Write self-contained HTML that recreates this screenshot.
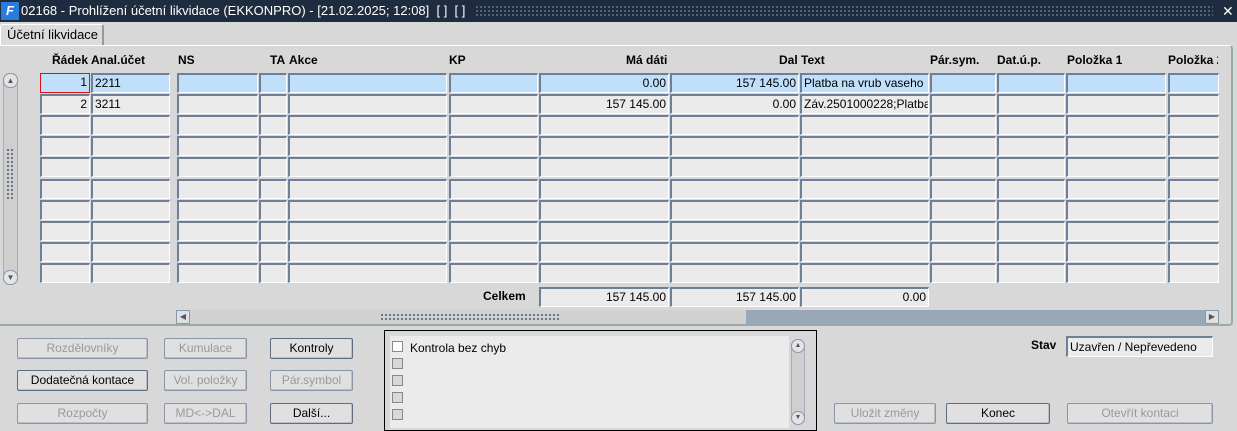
<!DOCTYPE html>
<html><head><meta charset="utf-8">
<style>
*{box-sizing:border-box}
body{margin:0;width:1237px;height:431px;background:#d8d8d8;font-family:"Liberation Sans",Arial,sans-serif;font-size:12px;position:relative;overflow:hidden}
.a{position:absolute}
.title{left:0;top:0;width:1237px;height:22px;background:#1f2b3e;color:#fff;font-size:13px;line-height:22px}
.dots{background-image:radial-gradient(#5a6a80 35%,transparent 40%);background-size:4px 4px}
.c{position:absolute;height:20px;background:#ebebeb;border-top:2px solid #6d7f99;border-left:2px solid #6d7f99;border-right:1px solid #fff;border-bottom:1px solid #fff;line-height:17px;padding:0 2px;white-space:nowrap;overflow:hidden;font-size:12px}
.sel{background:#bfdffb}
.r{text-align:right}
.h{position:absolute;font-weight:bold;top:53px;font-size:12px}
.b{position:absolute;height:21px;border:1px solid #8a96a8;border-radius:2px;background:#e0e0e0;text-align:center;line-height:19px;color:#999;font-size:12px;box-shadow:inset -1px -1px 0 #b8c0cc}
.b.on{color:#000;border-color:#5f6d82}
.cb{position:absolute;left:392px;width:11px;height:11px;border:1px solid #888;background:#d8d8d8}
</style></head><body>
<div class="a title"><span class="a" style="left:1px;top:2px;width:18px;height:18px;background:#2a7be0;color:#fff;font-weight:bold;font-style:italic;line-height:18px;text-align:center;font-size:13px">F</span><span class="a" style="left:21px">02168 - Prohlížení účetní likvidace (EKKONPRO) - [21.02.2025; 12:08]&nbsp; [ ]&nbsp; [ ]</span>
<div class="a dots" style="left:475px;top:5px;width:738px;height:12px"></div>
<span class="a" style="left:1222px;font-size:14px">✕</span></div>
<div class="a" style="left:0;top:24px;width:104px;height:22px;border:1px solid #fff;border-bottom:none;border-right:2px solid #999;border-radius:3px 3px 0 0;background:#dcdcdc;font-size:13px;line-height:20px;padding-left:6px">Účetní likvidace</div>
<div class="a" style="left:0;top:45px;width:1233px;height:281px;border-top:1px solid #fff;border-right:2px solid #9aa;border-bottom:2px solid #9aa;border-radius:0 4px 4px 0"></div>
<div class="a" style="left:3px;top:73px;width:15px;height:212px;background:#cfcfcf;border:1px solid #aab;border-radius:7px"></div>
<div class="a" style="left:3px;top:73px;width:15px;height:15px;border:1px solid #8898b0;border-radius:7px;background:#e4e4e4;font-size:8px;text-align:center;line-height:13px;color:#556">▲</div>
<div class="a" style="left:3px;top:270px;width:15px;height:15px;border:1px solid #8898b0;border-radius:7px;background:#e4e4e4;font-size:8px;text-align:center;line-height:13px;color:#556">▼</div>
<div class="a dots" style="left:6px;top:148px;width:8px;height:52px"></div>
<div class="h" style="left:52px">Řádek</div><div class="h" style="left:91px">Anal.účet</div><div class="h" style="left:178px">NS</div><div class="h" style="left:270px">TA</div><div class="h" style="left:289px">Akce</div><div class="h" style="left:449px">KP</div><div class="h" style="left:626px">Má dáti</div><div class="h" style="left:779px">Dal</div><div class="h" style="left:801px">Text</div><div class="h" style="left:930px">Pár.sym.</div><div class="h" style="left:997px">Dat.ú.p.</div><div class="h" style="left:1067px">Položka 1</div><div class="h" style="left:1168px;width:50px;overflow:hidden;white-space:nowrap">Položka 2</div>
<div id="g"></div>
<div class="h" style="left:483px;top:289px">Celkem</div>
<div class="c r" style="left:539px;top:287px;width:130px">157 145.00</div>
<div class="c r" style="left:670px;top:287px;width:129px">157 145.00</div>
<div class="c r" style="left:800px;top:287px;width:129px">0.00</div>
<div class="a" style="left:176px;top:310px;width:1043px;height:14px;background:#98a8b8"></div>
<div class="a" style="left:190px;top:310px;width:556px;height:14px;background:#d2d2d2"></div>
<div class="a dots" style="left:380px;top:313px;width:180px;height:8px"></div>
<div class="a" style="left:176px;top:310px;width:14px;height:14px;background:#e0e0e0;border:1px solid #8898b0;font-size:8px;line-height:12px;text-align:center;color:#556">◀</div>
<div class="a" style="left:1205px;top:310px;width:14px;height:14px;background:#e0e0e0;border:1px solid #8898b0;font-size:8px;line-height:12px;text-align:center;color:#556">▶</div>
<div class="b" style="left:17px;top:338px;width:131px">Rozdělovníky</div>
<div class="b" style="left:164px;top:338px;width:83px">Kumulace</div>
<div class="b on" style="left:270px;top:338px;width:83px">Kontroly</div>
<div class="b on" style="left:17px;top:370px;width:131px">Dodatečná kontace</div>
<div class="b" style="left:164px;top:370px;width:83px">Vol. položky</div>
<div class="b" style="left:270px;top:370px;width:83px">Pár.symbol</div>
<div class="b" style="left:17px;top:403px;width:131px">Rozpočty</div>
<div class="b" style="left:164px;top:403px;width:83px">MD&lt;-&gt;DAL</div>
<div class="b on" style="left:270px;top:403px;width:83px">Další...</div>
<div class="a" style="left:384px;top:330px;width:433px;height:101px;border:1px solid #000;background:#d8d8d8"></div>
<div class="a" style="left:390px;top:336px;width:399px;height:92px;background:#ebebeb"></div>
<div class="cb" style="top:341px;background:#fff"></div><span class="a" style="left:410px;top:341px">Kontrola bez chyb</span>
<div class="cb" style="top:358px"></div><div class="cb" style="top:375px"></div><div class="cb" style="top:392px"></div><div class="cb" style="top:409px"></div>
<div class="a" style="left:791px;top:339px;width:14px;height:86px;background:#cfcfcf;border:1px solid #aab;border-radius:7px"></div>
<div class="a" style="left:791px;top:339px;width:14px;height:14px;border:1px solid #8898b0;border-radius:7px;background:#e4e4e4;font-size:7px;text-align:center;line-height:12px;color:#556">▲</div>
<div class="a" style="left:791px;top:411px;width:14px;height:14px;border:1px solid #8898b0;border-radius:7px;background:#e4e4e4;font-size:7px;text-align:center;line-height:12px;color:#556">▼</div>
<div class="h" style="left:1031px;top:338px">Stav</div>
<div class="c" style="left:1066px;top:336px;width:147px;height:21px;line-height:18px;font-size:12px">Uzavřen / Nepřevedeno</div>
<div class="b" style="left:834px;top:403px;width:102px">Uložit změny</div>
<div class="b on" style="left:946px;top:403px;width:104px">Konec</div>
<div class="b" style="left:1067px;top:403px;width:146px">Otevřít kontaci</div>
<script>
var cols=[[40,50],[91,79],[177,81],[259,28],[288,159],[449,89],[539,130],[670,129],[800,129],[930,66],[997,68],[1066,100],[1168,51]];
var d=[["1","2211","","","","","0.00","157 145.00","Platba na vrub vaseho"],["2","3211","","","","","157 145.00","0.00","Záv.2501000228;Platba"]];
var h="";
for(var r=0;r<10;r++){var y=73+Math.round(r*21.1);for(var c=0;c<cols.length;c++){var t=(d[r]&&d[r][c])||"";var cl="c"+(r==0?" sel":"")+((c==0||c==6||c==7)?" r":"");var st="left:"+cols[c][0]+"px;top:"+y+"px;width:"+cols[c][1]+"px;";if(r==0&&c==0)st+="border:1px solid #e01010;";h+='<div class="'+cl+'" style="'+st+'">'+t+'</div>';}}
document.getElementById("g").innerHTML=h;
</script>
</body></html>
